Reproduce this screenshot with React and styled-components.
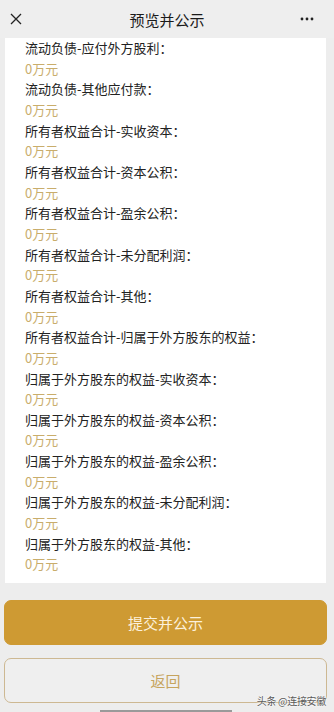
import React from "react";
import styled, { createGlobalStyle } from "styled-components";

const Global = createGlobalStyle`
  html, body { margin: 0; padding: 0; background: #ededed; }
  body { font-family: "Noto Sans CJK SC", "Noto Sans", sans-serif; }
  #root { width: 334px; height: 712px; overflow: hidden; }
`;

const Page = styled.div`
  width: 334px;
  height: 712px;
  background: #ededed;
  display: flex;
  flex-direction: column;
  position: relative;
  overflow: hidden;
`;

const Header = styled.div`
  height: 38px;
  flex: 0 0 38px;
  display: grid;
  grid-template-columns: 50px 1fr 50px;
  align-items: center;
  background: #eeeeee;
`;

const Title = styled.div`
  text-align: center;
  font-size: 15px;
  color: #1a1a1a;
  line-height: 20px;
  margin-top: 1px;
`;

const IconCell = styled.div`
  display: flex;
  align-items: center;
  justify-content: ${(p) => p.$justify};
  padding: ${(p) => p.$pad};
`;

const Card = styled.div`
  margin: 0 8px 0 5px;
  background: #ffffff;
  padding: 0 20px 8px 20px;
  display: flex;
  flex-direction: column;
`;

const Label = styled.div`
  font-size: 13px;
  line-height: 20.65px;
  color: #222;
  white-space: nowrap;
`;

const Value = styled.div`
  font-size: 13px;
  line-height: 20.65px;
  color: #c9ad6b;
`;

const Buttons = styled.div`
  display: flex;
  flex-direction: column;
  gap: 13px;
  padding: 17px 7px 0 4px;
`;

const Button = styled.div`
  height: ${(p) => (p.$primary ? "43px" : "43px")};
  border-radius: 7px;
  display: flex;
  align-items: center;
  justify-content: center;
  font-size: 15px;
  background: ${(p) => (p.$primary ? "#ce9a33" : "#efefef")};
  color: ${(p) => (p.$primary ? "#fcf1dc" : "#c6a45e")};
  border: 1px solid ${(p) => (p.$primary ? "#ce9a33" : "#cdb892")};
`;

const Watermark = styled.div`
  position: absolute;
  right: 8px;
  bottom: 4px;
  font-size: 10px;
  color: #5a5a5a;
  text-shadow: 0 0 2px #fff, 0 0 2px #fff;
  letter-spacing: -0.3px;
`;

const HomeBar = styled.div`
  position: absolute;
  left: 100px;
  width: 132px;
  bottom: 0;
  height: 2px;
  background: #9a9a9a;
`;

const rows = [
  "流动负债-应付外方股利：",
  "流动负债-其他应付款：",
  "所有者权益合计-实收资本：",
  "所有者权益合计-资本公积：",
  "所有者权益合计-盈余公积：",
  "所有者权益合计-未分配利润：",
  "所有者权益合计-其他：",
  "所有者权益合计-归属于外方股东的权益：",
  "归属于外方股东的权益-实收资本：",
  "归属于外方股东的权益-资本公积：",
  "归属于外方股东的权益-盈余公积：",
  "归属于外方股东的权益-未分配利润：",
  "归属于外方股东的权益-其他：",
];

export default function App() {
  return (
    <Page>
      <Global />
      <Header>
        <IconCell $justify="flex-start" $pad="0 0 0 10px">
          <svg width="12" height="12" viewBox="0 0 12 12">
            <path d="M1 1 L11 11 M11 1 L1 11" stroke="#222" strokeWidth="1.3" fill="none" />
          </svg>
        </IconCell>
        <Title>预览并公示</Title>
        <IconCell $justify="flex-end" $pad="0 20px 0 0">
          <svg width="14" height="4" viewBox="0 0 14 4">
            <circle cx="2" cy="2" r="1.4" fill="#222" />
            <circle cx="7" cy="2" r="1.4" fill="#222" />
            <circle cx="12" cy="2" r="1.4" fill="#222" />
          </svg>
        </IconCell>
      </Header>
      <Card>
        {rows.map((r) => (
          <React.Fragment key={r}>
            <Label>{r}</Label>
            <Value>0万元</Value>
          </React.Fragment>
        ))}
      </Card>
      <Buttons>
        <Button $primary>提交并公示</Button>
        <Button>返回</Button>
      </Buttons>
      <Watermark>头条 @连接安徽</Watermark>
      <HomeBar />
    </Page>
  );
}
